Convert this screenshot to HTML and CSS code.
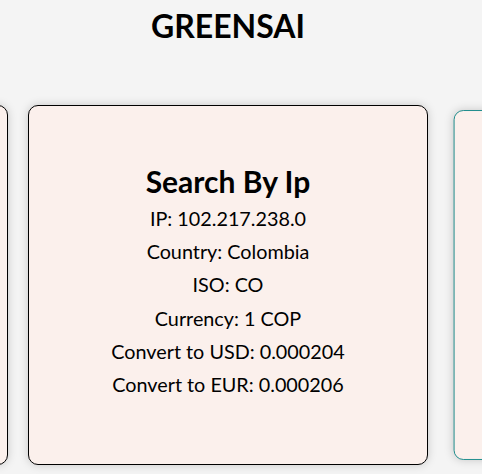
FILE: index.html
```html
<!DOCTYPE html>
<html lang="en">
<head>
<meta charset="utf-8">
<title>GREENSAI</title>
<link rel="stylesheet" href="styles.css">
</head>
<body>
<div class="page">
  <h1 class="brand">GREENSAI</h1>
  <div class="stage">
    <div class="track">
      <div class="card"></div>
      <div class="card card-active">
        <h2 class="card-title">Search By Ip</h2>
        <p class="card-line">IP: 102.217.238.0</p>
        <p class="card-line">Country: Colombia</p>
        <p class="card-line">ISO: CO</p>
        <p class="card-line">Currency: 1 COP</p>
        <p class="card-line">Convert to USD: 0.000204</p>
        <p class="card-line">Convert to EUR: 0.000206</p>
      </div>
      <div class="card card-next"></div>
    </div>
  </div>
</div>
</body>
</html>
```
FILE: styles.css
```css
html, body {
  margin: 0;
  padding: 0;
  background: #f4f4f4;
  font-family: Lato, "Open Sans", sans-serif;
  color: #000;
  overflow: hidden;
}

.page {
  width: 456px;
}

.brand {
  margin: 6px 0 0;
  text-align: center;
  font-size: 32px;
  font-weight: 700;
  line-height: normal;
}

.stage {
  width: 482px;
  overflow: hidden;
  padding: 60px 0 20px 28px;
  box-sizing: border-box;
}

.track {
  display: flex;
  gap: 20px;
  transform: translateX(-420px);
}

.card {
  flex: 0 0 400px;
  box-sizing: border-box;
  height: 360px;
  background: #fbf0ec;
  border: 1px solid #000;
  border-radius: 10px;
  box-shadow: 0 0 10px rgba(0, 0, 0, 0.18);
  padding-top: 57px;
  text-align: center;
}

.card-next {
  border-color: #1a8a8a;
  transform: scale(0.972);
}

.card-title {
  margin: 0 0 3px;
  font-size: 30px;
  font-weight: 700;
  line-height: normal;
}

.card-line {
  margin: 0;
  font-size: 19.8px;
  line-height: 33.2px;
}
```
